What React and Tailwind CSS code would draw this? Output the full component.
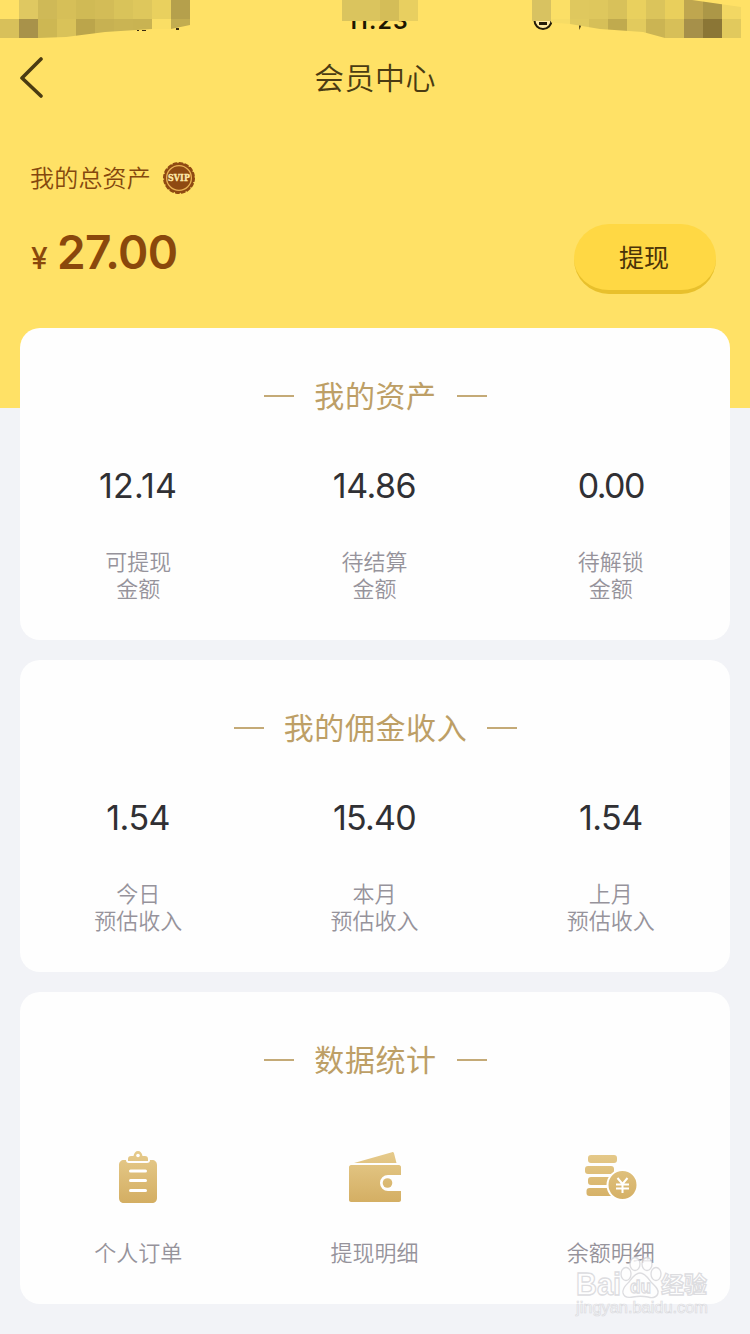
import React from 'react';

const assets = [
  { value: '12.14', label: ['可提现', '金额'], tracking: 'tracking-[0.2px]' },
  { value: '14.86', label: ['待结算', '金额'], tracking: 'tracking-[-0.5px]' },
  { value: '0.00', label: ['待解锁', '金额'], tracking: 'tracking-[-1.6px]' },
];

const income = [
  { value: '1.54', label: ['今日', '预估收入'], tracking: 'tracking-[-0.5px]' },
  { value: '15.40', label: ['本月', '预估收入'], tracking: 'tracking-[-0.8px]' },
  { value: '1.54', label: ['上月', '预估收入'], tracking: 'tracking-[-0.5px]' },
];

// x, y, width, height, color
const mosaicLeft = [
  [0, 0, 19, 19, '#ffe166'], [19, 0, 19, 19, '#dfc861'], [38, 0, 19, 19, '#cfb957'],
  [57, 0, 19, 19, '#d6bf58'], [76, 0, 19, 19, '#d0ba55'], [95, 0, 19, 19, '#d3bc57'],
  [114, 0, 19, 19, '#d9c35a'], [133, 0, 19, 19, '#dec75c'], [152, 0, 19, 19, '#e9d05e'],
  [171, 0, 19, 19, '#b5a04c'],
  [0, 19, 19, 19, '#d8c05a'], [19, 19, 19, 19, '#a8924a'], [38, 19, 19, 19, '#cdb753'],
  [57, 19, 19, 19, '#d9c259'], [76, 19, 19, 19, '#bba54b'], [95, 19, 19, 19, '#c7b152'],
  [114, 19, 19, 19, '#cab453'], [133, 19, 19, 19, '#c9b352'], [152, 19, 19, 19, '#fade65'],
  [171, 19, 19, 19, '#c2ac50'],
];

const mosaicRight = [
  [532, 0, 19, 21, '#d8c261'], [551, 0, 19, 19, '#fbdf66'], [570, 0, 19, 19, '#dfc85e'],
  [589, 0, 19, 19, '#dec75d'], [608, 0, 19, 19, '#d8c15a'], [627, 0, 19, 19, '#e9d05e'],
  [646, 0, 19, 19, '#dbc45b'], [665, 0, 19, 19, '#e9cf5c'], [684, 0, 19, 19, '#bfa64f'],
  [703, 0, 19, 19, '#ac9747'], [722, 0, 19, 19, '#f2d763'],
  [551, 19, 19, 19, '#f7dc65'], [570, 19, 19, 19, '#e1ca5e'], [589, 19, 19, 19, '#d6bf58'],
  [608, 19, 19, 19, '#c0aa4e'], [627, 19, 19, 19, '#e2ca5d'], [646, 19, 19, 19, '#cbb453'],
  [665, 19, 19, 19, '#d7bf58'], [684, 19, 19, 19, '#a6904a'], [703, 19, 19, 19, '#8b7636'],
  [722, 19, 19, 19, '#e1c95d'],
];

function Blocks({ cells }) {
  return cells.map(([x, y, w, h, fill]) => (
    <rect key={`${x}-${y}`} x={x} y={y} width={w} height={h} fill={fill} />
  ));
}

function StatusBar() {
  return (
    <div className="relative h-[38px] overflow-hidden">
      <div className="pt-[9px] pl-[6px] text-center text-[23px] leading-[24px] font-semibold tracking-[1.2px] text-[#1d1600]">
        11:23
      </div>
      <svg className="absolute inset-0" width="750" height="38" shapeRendering="crispEdges">
        <defs>
          <clipPath id="left"><path d="M0 0H190V25L171 29H152L105 32L66 37L38 38H0Z" /></clipPath>
          <clipPath id="right"><path d="M532 0H692L741 7V38H665L643 32L600 29L570 24L532 21Z" /></clipPath>
        </defs>
        <g clipPath="url(#left)"><Blocks cells={mosaicLeft} /></g>
        <g shapeRendering="geometricPrecision">
          <circle cx="543" cy="20.5" r="8.5" fill="#ffe9a0" stroke="#241c08" strokeWidth="2" />
          <path d="M539 22h8v3h-8zM579 24h2.5l-2 6z" fill="#241c08" />
        </g>
        <g clipPath="url(#right)"><Blocks cells={mosaicRight} /></g>
        <path d="M342 0h38v21h-38z" fill="#dac45e" />
        <path d="M380 0h19v21h-19z" fill="#d4bd58" />
        <path d="M399 0h19v21h-19z" fill="#e8cf60" />
        <path d="M137 30h2v1h-2zM142 30h4v1h-4zM176 28h3v2h-3z" fill="#3a2b10" />
      </svg>
    </div>
  );
}

function SvipBadge() {
  return (
    <svg width="32" height="32" viewBox="0 0 32 32">
      <circle cx="16" cy="16" r="14.9" fill="#8f4a12" />
      <circle cx="16" cy="16" r="14.9" fill="none" stroke="#8f4a12" strokeWidth="2.2" strokeLinecap="round" strokeDasharray="3 2.85" />
      <circle cx="16" cy="16" r="12.4" fill="none" stroke="#e9b254" strokeWidth="1.3" />
      <text x="16" y="19.2" textAnchor="middle" textLength="22" lengthAdjust="spacingAndGlyphs" fontSize="9.5" fontWeight="700" fontFamily="DejaVu Serif, serif" fill="#ffe9a8" stroke="#ffe9a8" strokeWidth="0.4">
        SVIP
      </text>
    </svg>
  );
}

function Gold({ id }) {
  return (
    <linearGradient id={id} x1="0" y1="0" x2="0" y2="54" gradientUnits="userSpaceOnUse">
      <stop offset="0" stopColor="#e6cb8c" />
      <stop offset="1" stopColor="#d3ad61" />
    </linearGradient>
  );
}

function OrderIcon() {
  return (
    <svg width="54" height="54" viewBox="0 0 54 54">
      <defs><Gold id="gold-order" /></defs>
      <path fill="url(#gold-order)" d="M13 9h2c0 2 1 3 3 3h18c2 0 3-1 3-3h2c3 0 5 2 5 5v33c0 3-2 5-5 5H13c-3 0-5-2-5-5V14c0-3 2-5 5-5Z" />
      <path fill="url(#gold-order)" d="M17 10V8c0-2 1-3 3-3h2.500c.5-3 2-5 4.500-5s4 2 4.500 5H34c2 0 3 1 3 3v2Z" />
      <circle cx="27" cy="4.500" r="1.800" fill="#fff" />
      <path d="M19.500 20h15M19.500 29.500h15M19.500 39.500h15" stroke="#fff" strokeWidth="3" strokeLinecap="round" />
    </svg>
  );
}

function WalletIcon() {
  return (
    <svg className="ml-px" width="54" height="54" viewBox="0 0 54 54">
      <defs><Gold id="gold-wallet" /></defs>
      <path fill="url(#gold-wallet)" d="M6 12 44 1.200c1-.3 1.700 0 2 1L48.500 12Z" />
      <path fill="url(#gold-wallet)" d="M3 14h48c1 0 2 1 2 2v8H40a8 8 0 0 0 0 16h13v9c0 1-1 2-2 2H3c-1 0-2-1-2-2V16c0-1 1-2 2-2Z" />
      <circle cx="39.500" cy="32" r="4.800" fill="url(#gold-wallet)" />
    </svg>
  );
}

function BalanceIcon() {
  return (
    <svg width="54" height="54" viewBox="0 0 54 54">
      <defs><Gold id="gold-balance" /></defs>
      <g fill="url(#gold-balance)">
        <rect x="4" y="4" width="29" height="8" rx="3" />
        <rect x="1" y="15" width="29" height="8" rx="3" />
        <rect x="4" y="26" width="29" height="8" rx="3" />
        <rect x="2.500" y="37" width="29" height="8" rx="3" />
      </g>
      <circle cx="38.500" cy="34" r="15" fill="url(#gold-balance)" stroke="#fff" strokeWidth="2" />
      <path d="m33.500 27 5 6 5-6M32 33.500h13M32 37.500h13M38.500 33v9" fill="none" stroke="#fff" strokeWidth="2" />
    </svg>
  );
}

const stats = [
  { label: '个人订单', icon: <OrderIcon /> },
  { label: '提现明细', icon: <WalletIcon /> },
  { label: '余额明细', icon: <BalanceIcon /> },
];

function Card({ title, children }) {
  return (
    <section className="h-[312px] rounded-[20px] bg-[#fefefe] pt-[46px]">
      <h2 className="flex h-11 items-center justify-center gap-5 pl-px text-[30px] tracking-[0.6px] text-[#bd9f66]">
        <span className="h-[2px] w-[30px] bg-[#c4aa77]" />
        {title}
        <span className="h-[2px] w-[30px] bg-[#c4aa77]" />
      </h2>
      <div className="mr-px grid grid-cols-3 text-center">{children}</div>
    </section>
  );
}

function Amount({ value, label, tracking }) {
  return (
    <div className="pt-[46px]">
      <div className={`h-11 text-[34px] leading-[44px] text-[#303034] ${tracking}`}>{value}</div>
      <div className="pt-[41px] text-[22px] leading-[27px] font-[350] text-[#96939b]">
        {label.map((line) => (
          <div key={line}>{line}</div>
        ))}
      </div>
    </div>
  );
}

function Watermark() {
  return (
    <div className="absolute top-[1256px] left-[574px] w-[140px] opacity-80">
      <svg width="140" height="64" viewBox="0 0 140 64">
        <g fill="#fff" stroke="#d5d5d9" strokeWidth="1.300" fontFamily="Liberation Sans, sans-serif" fontWeight="700">
          <text x="2" y="39" fontSize="31" textLength="45" lengthAdjust="spacingAndGlyphs">Bai</text>
          <ellipse cx="52" cy="18" rx="5" ry="6.500" />
          <ellipse cx="61" cy="8" rx="5" ry="6.500" />
          <ellipse cx="73" cy="8" rx="5" ry="6.500" />
          <ellipse cx="82" cy="18" rx="5" ry="6.500" />
          <path d="M66 17c5 0 8 5 11 9 4 4 8 7 7 11-1 5-6 5-10 4-5-1-10-1-15 0-5 1-9 0-10-4-1-5 3-8 6-11 3-4 6-9 11-9Z" />
          <text x="56" y="37" fontSize="18" textLength="21" lengthAdjust="spacingAndGlyphs">du</text>
          <text x="87" y="37" fontSize="23" textLength="46" fontFamily="Noto Sans CJK SC, sans-serif">经验</text>
          <text x="2" y="57" fontSize="16" fontWeight="400" strokeWidth="0.700" textLength="132" lengthAdjust="spacingAndGlyphs">jingyan.baidu.com</text>
        </g>
      </svg>
    </div>
  );
}

export default function App() {
  return (
    <div className="relative h-[1334px] w-[750px] overflow-hidden bg-[#f2f3f7] font-['Inter','Noto_Sans_CJK_SC',sans-serif]">
      <div className="h-[408px] bg-[#ffe166]">
        <StatusBar />
        <header className="flex h-20 items-center px-5">
          <svg width="24" height="42" viewBox="0 0 24 42" fill="none" stroke="#4a3b12" strokeWidth="3.600" strokeLinecap="round" strokeLinejoin="round">
            <path d="M21 2 2 21l19 18" />
          </svg>
          <h1 className="flex-1 pr-6 text-center text-[30px] font-[350] tracking-[0.5px] text-[#4a3b12]">会员中心</h1>
        </header>

        <div className="flex items-start justify-between pt-[40px] pr-[34px] pl-[30px]">
          <div>
            <div className="flex h-10 items-center gap-3 text-[24px] font-[350] tracking-[0.2px] text-[#84480e]">
              <span className="pt-[2px]">我的总资产</span>
              <SvipBadge />
            </div>
            <div className="mt-[26px] flex items-baseline text-[#8a480c]">
              <span className="w-[27px] pl-px text-[30px] font-medium">¥</span>
              <span className="text-[46px] leading-[56px] font-semibold tracking-[-0.6px]">27.00</span>
            </div>
          </div>
          <button className="mt-[66px] h-[70px] w-[142px] rounded-full border-b-4 border-[#e8c02c] bg-[#ffd844] pt-1 pr-[2px] text-[25px] text-[#4a3208]">
            提现
          </button>
        </div>
      </div>

      <main className="-mt-20 flex flex-col gap-5 px-5">
        <Card title="我的资产">
          {assets.map((item, i) => <Amount key={i} {...item} />)}
        </Card>
        <Card title="我的佣金收入">
          {income.map((item, i) => <Amount key={i} {...item} />)}
        </Card>
        <Card title="数据统计">
          {stats.map((item) => (
            <div key={item.label} className="flex flex-col items-center pt-[69px]">
              {item.icon}
              <div className="pt-[30px] text-[22px] leading-[36px] font-[350] text-[#96939b]">{item.label}</div>
            </div>
          ))}
        </Card>
      </main>
      <Watermark />
    </div>
  );
}
